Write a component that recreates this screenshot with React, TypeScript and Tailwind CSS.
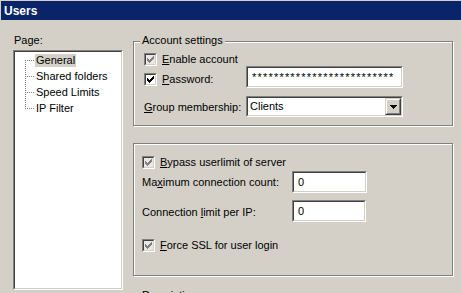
import React from "react";

const CHECK_PATH =
  "M6 0h1v1h-1z M5 1h2v1h-2z M0 2h1v1h-1z M4 2h3v1h-3z M0 3h2v1h-2z M3 3h3v1h-3z M0 4h5v1h-5z M1 5h3v1h-3z M2 6h1v1h-1z";

function CheckBox({ disabled = false }: { disabled?: boolean }) {
  return (
    <span className="block w-[13px] h-[13px] shrink-0 border border-t-[#808080] border-l-[#808080] border-b-white border-r-white">
      <span
        className={`flex w-[11px] h-[11px] items-center justify-center border border-t-[#404040] border-l-[#404040] border-b-[#d4d0c8] border-r-[#d4d0c8] ${
          disabled ? "bg-[#eae8e4]" : "bg-white"
        }`}
      >
        <svg width="7" height="7" viewBox="0 0 7 7" shapeRendering="crispEdges">
          <path d={CHECK_PATH} fill={disabled ? "#808080" : "#000"} />
        </svg>
      </span>
    </span>
  );
}

function Sunken({ className = "", children }: { className?: string; children?: React.ReactNode }) {
  return (
    <div
      className={`border border-t-[#808080] border-l-[#808080] border-b-white border-r-white ${className}`}
    >
      <div className="h-full w-full border border-t-[#404040] border-l-[#404040] border-b-[#d4d0c8] border-r-[#d4d0c8] bg-white overflow-hidden">
        {children}
      </div>
    </div>
  );
}

function Group({ label, className = "", children }: { label?: string; className?: string; children?: React.ReactNode }) {
  return (
    <div
      className={`relative border border-[#808080] shadow-[inset_1px_1px_0_#fff,1px_1px_0_#fff] ${className}`}
    >
      {label && (
        <span className="absolute -top-[8px] left-[6px] px-[2px] bg-[#d4d0c8] leading-[13px]">
          {label}
        </span>
      )}
      {children}
    </div>
  );
}

const pages = ["General", "Shared folders", "Speed Limits", "IP Filter"];

function TreeRow({ label, index, selected }: { label: string; index: number; selected?: boolean }) {
  const last = index === pages.length - 1;
  const first = index === 0;
  return (
    <div className="flex h-[16px] items-center">
      <svg width="20" height="16" viewBox="0 0 20 16" shapeRendering="crispEdges" className="shrink-0">
        <line
          x1="10.5"
          x2="10.5"
          y1={first ? 8 : 0}
          y2={last ? 9 : 16}
          stroke="#808080"
          strokeDasharray="1 1"
        />
        <line x1="12" x2="19" y1="8.5" y2="8.5" stroke="#808080" strokeDasharray="1 1" />
      </svg>
      <span
        className={`px-px leading-[13px] h-[13px] whitespace-nowrap ${selected ? "bg-[#d4d0c8]" : ""}`}
      >
        {label}
      </span>
    </div>
  );
}

export default function App() {
  return (
    <div className="w-[461px] h-[293px] overflow-hidden bg-[#d4d0c8] pt-px pl-px font-['Liberation_Sans',Arial,sans-serif] text-[11px] text-black">
      <div className="h-[19px] bg-[#0a246a] pl-[3px] pt-px leading-[19px] font-bold text-[12px] text-white">
        Users
      </div>

      <div className="flex">
        <div className="pl-[12px] pt-[14px]">
          <div className="h-[13px] leading-[13px] mb-[3px] pl-px">Page:</div>
          <Sunken className="w-[110px] h-[240px]">
            {pages.map((p, i) => (
              <TreeRow key={p} label={p} index={i} selected={i === 0} />
            ))}
          </Sunken>
        </div>

        <div className="ml-[10px] pt-[21px] w-[320px]">
          <Group label="Account settings" className="h-[85px] pl-[10px] pt-[11px]">
            <div className="flex h-[13px] items-center gap-[5px]">
              <CheckBox disabled />
              <span className="leading-[13px]">
                <u>E</u>nable account
              </span>
            </div>
            <div className="flex">
              <div className="flex w-[102px] items-center gap-[5px] mt-[7px] h-[13px]">
                <CheckBox />
                <span className="leading-[13px]">
                  <u>P</u>assword:
                </span>
              </div>
              <Sunken className="w-[157px] h-[22px]">
                <div className="pl-[4px] pt-[3px] leading-[13px] whitespace-nowrap tracking-[1.2px]">
                  {"*".repeat(26)}
                </div>
              </Sunken>
            </div>
            <div className="flex items-center mt-[8px]">
              <div className="w-[102px] leading-[13px] pt-[2px]">
                <u>G</u>roup membership:
              </div>
              <Sunken className="w-[157px] h-[21px]">
                <div className="flex h-full items-center justify-between">
                  <span className="pl-[2px] leading-[13px]">Clients</span>
                  <div className="h-[17px] w-[16px] border border-t-[#d4d0c8] border-l-[#d4d0c8] border-b-[#404040] border-r-[#404040]">
                    <div className="flex h-full w-full items-center justify-center border border-t-white border-l-white border-b-[#808080] border-r-[#808080] bg-[#d4d0c8]">
                      <svg width="7" height="4" viewBox="0 0 7 4" shapeRendering="crispEdges">
                        <path d="M0 0h7v1h-7z M1 1h5v1h-5z M2 2h3v1h-3z M3 3h1v1h-1z" fill="#000" />
                      </svg>
                    </div>
                  </div>
                </div>
              </Sunken>
            </div>
          </Group>

          <Group className="mt-[17px] h-[133px] pl-[8px] pt-[12px]">
            <div className="flex h-[13px] items-center gap-[5px]">
              <CheckBox disabled />
              <span className="leading-[13px]">
                <u>B</u>ypass userlimit of server
              </span>
            </div>
            <div className="flex items-center mt-[2px]">
              <div className="w-[150px] leading-[13px]">
                Ma<u>x</u>imum connection count:
              </div>
              <Sunken className="w-[75px] h-[22px]">
                <div className="pl-[4px] pt-[3px] leading-[13px]">0</div>
              </Sunken>
            </div>
            <div className="flex items-center mt-[7px]">
              <div className="w-[150px] leading-[13px] pt-[2px]">
                Connection <u>l</u>imit per IP:
              </div>
              <Sunken className="w-[74px] h-[22px]">
                <div className="pl-[4px] pt-[3px] leading-[13px]">0</div>
              </Sunken>
            </div>
            <div className="flex h-[13px] items-center gap-[5px] mt-[17px]">
              <CheckBox disabled />
              <span className="leading-[13px]">
                <u>F</u>orce SSL for user login
              </span>
            </div>
          </Group>

          <Group label="Description" className="mt-[20px] h-[60px]" />
        </div>
      </div>
    </div>
  );
}
